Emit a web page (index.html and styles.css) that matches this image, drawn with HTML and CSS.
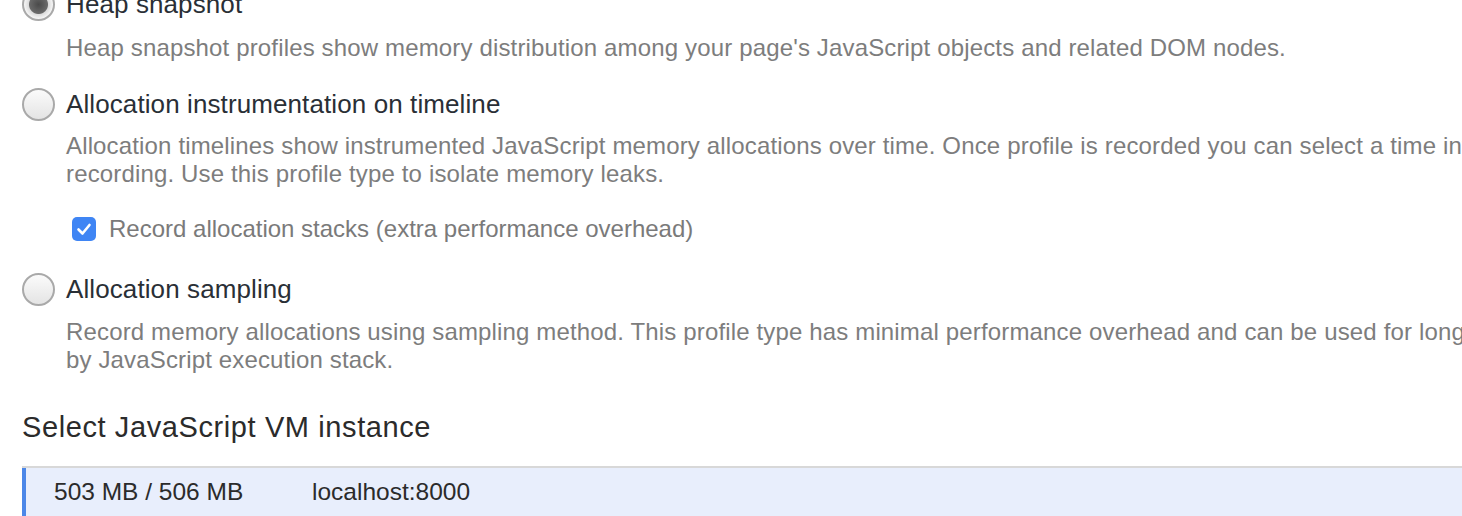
FILE: index.html
```html
<!DOCTYPE html>
<html>
<head>
<meta charset="utf-8">
<link rel="stylesheet" href="styles.css">
</head>
<body>
<div class="page">
  <div class="option first">
    <div class="choice">
      <span class="radio checked"></span>
      <span class="title">Heap snapshot</span>
    </div>
    <div class="desc">Heap snapshot profiles show memory distribution among your page's JavaScript objects and related DOM nodes.</div>
  </div>

  <div class="option">
    <div class="choice">
      <span class="radio"></span>
      <span class="title">Allocation instrumentation on timeline</span>
    </div>
    <div class="desc">Allocation timelines show instrumented JavaScript memory allocations over time. Once profile is recorded you can select a time interval to see objects that were allocated within it and still alive by the end of<br>recording. Use this profile type to isolate memory leaks.</div>
    <div class="check-row">
      <span class="checkbox">
        <svg width="24" height="24" viewBox="0 0 24 24"><path d="M6.5 12.5 L10.5 16.5 L17.5 8" fill="none" stroke="#fff" stroke-width="2.6" stroke-linecap="round" stroke-linejoin="round"/></svg>
      </span>
      <span class="check-label">Record allocation stacks (extra performance overhead)</span>
    </div>
  </div>

  <div class="option last">
    <div class="choice">
      <span class="radio"></span>
      <span class="title">Allocation sampling</span>
    </div>
    <div class="desc">Record memory allocations using sampling method. This profile type has minimal performance overhead and can be used for long running operations. It provides good approximation of allocations broken down<br>by JavaScript execution stack.</div>
  </div>

  <h2 class="heading">Select JavaScript VM instance</h2>

  <div class="vm-list">
    <div class="vm-row selected">
      <span class="vm-mem">503 MB / 506 MB</span>
      <span class="vm-url">localhost:8000</span>
    </div>
  </div>
</div>
</body>
</html>
```

FILE: styles.css
```css
html, body {
  margin: 0;
  padding: 0;
  background: #ffffff;
  overflow: hidden;
}

body {
  width: 1462px;
  height: 516px;
  font-family: "Liberation Sans", Arial, sans-serif;
}

.page {
  margin-top: -12px;
  padding-left: 22px;
  width: 1440px;
  overflow: hidden;
}

.option {
  margin-top: 26px;
}

.option.first {
  margin-top: 0;
}

.choice {
  display: flex;
  align-items: center;
  height: 33px;
  gap: 11px;
}

.radio {
  flex: none;
  width: 33px;
  height: 33px;
  box-sizing: border-box;
  border-radius: 50%;
  border: 2px solid #a9a9a9;
  background: linear-gradient(#fbfbfb, #e4e4e4);
}

.radio.checked {
  background: radial-gradient(circle at 50% 50%, #4a4a4a 0, #6a6a6a 9px, #dcdcdc 10px, #f4f4f4 14px);
}

.title {
  font-size: 26px;
  letter-spacing: 0.1px;
  color: #2a2f36;
  white-space: nowrap;
}

.desc {
  margin-top: 11px;
  margin-left: 44px;
  font-size: 24px;
  letter-spacing: 0.15px;
  line-height: 28px;
  color: #7d7d7d;
  white-space: nowrap;
}

.option.first .desc {
  margin-top: 13px;
}

.check-row {
  display: flex;
  align-items: center;
  height: 28px;
  margin-top: 27px;
  margin-left: 50px;
  gap: 13px;
}

.checkbox {
  flex: none;
  width: 24px;
  height: 24px;
  border-radius: 5px;
  background: #3f85f4;
  display: flex;
}

.check-label {
  font-size: 24px;
  color: #7a7a7a;
  white-space: nowrap;
}

.option.last {
  margin-top: 30px;
}

.option.last .desc {
  margin-top: 12px;
}

.heading {
  margin: 36px 0 0 0;
  font-weight: normal;
  font-size: 29px;
  letter-spacing: 0.6px;
  line-height: 34px;
  color: #2b2b2b;
}

.vm-list {
  margin-top: 22px;
  border-top: 2px solid #d8d8d8;
}

.vm-row {
  display: flex;
  align-items: center;
  height: 48px;
  padding-left: 28px;
  border-left: 4px solid #4c87e8;
  background: #e8eefc;
  font-size: 24.5px;
  color: #2b2b2b;
}

.vm-mem {
  width: 258px;
}
```
